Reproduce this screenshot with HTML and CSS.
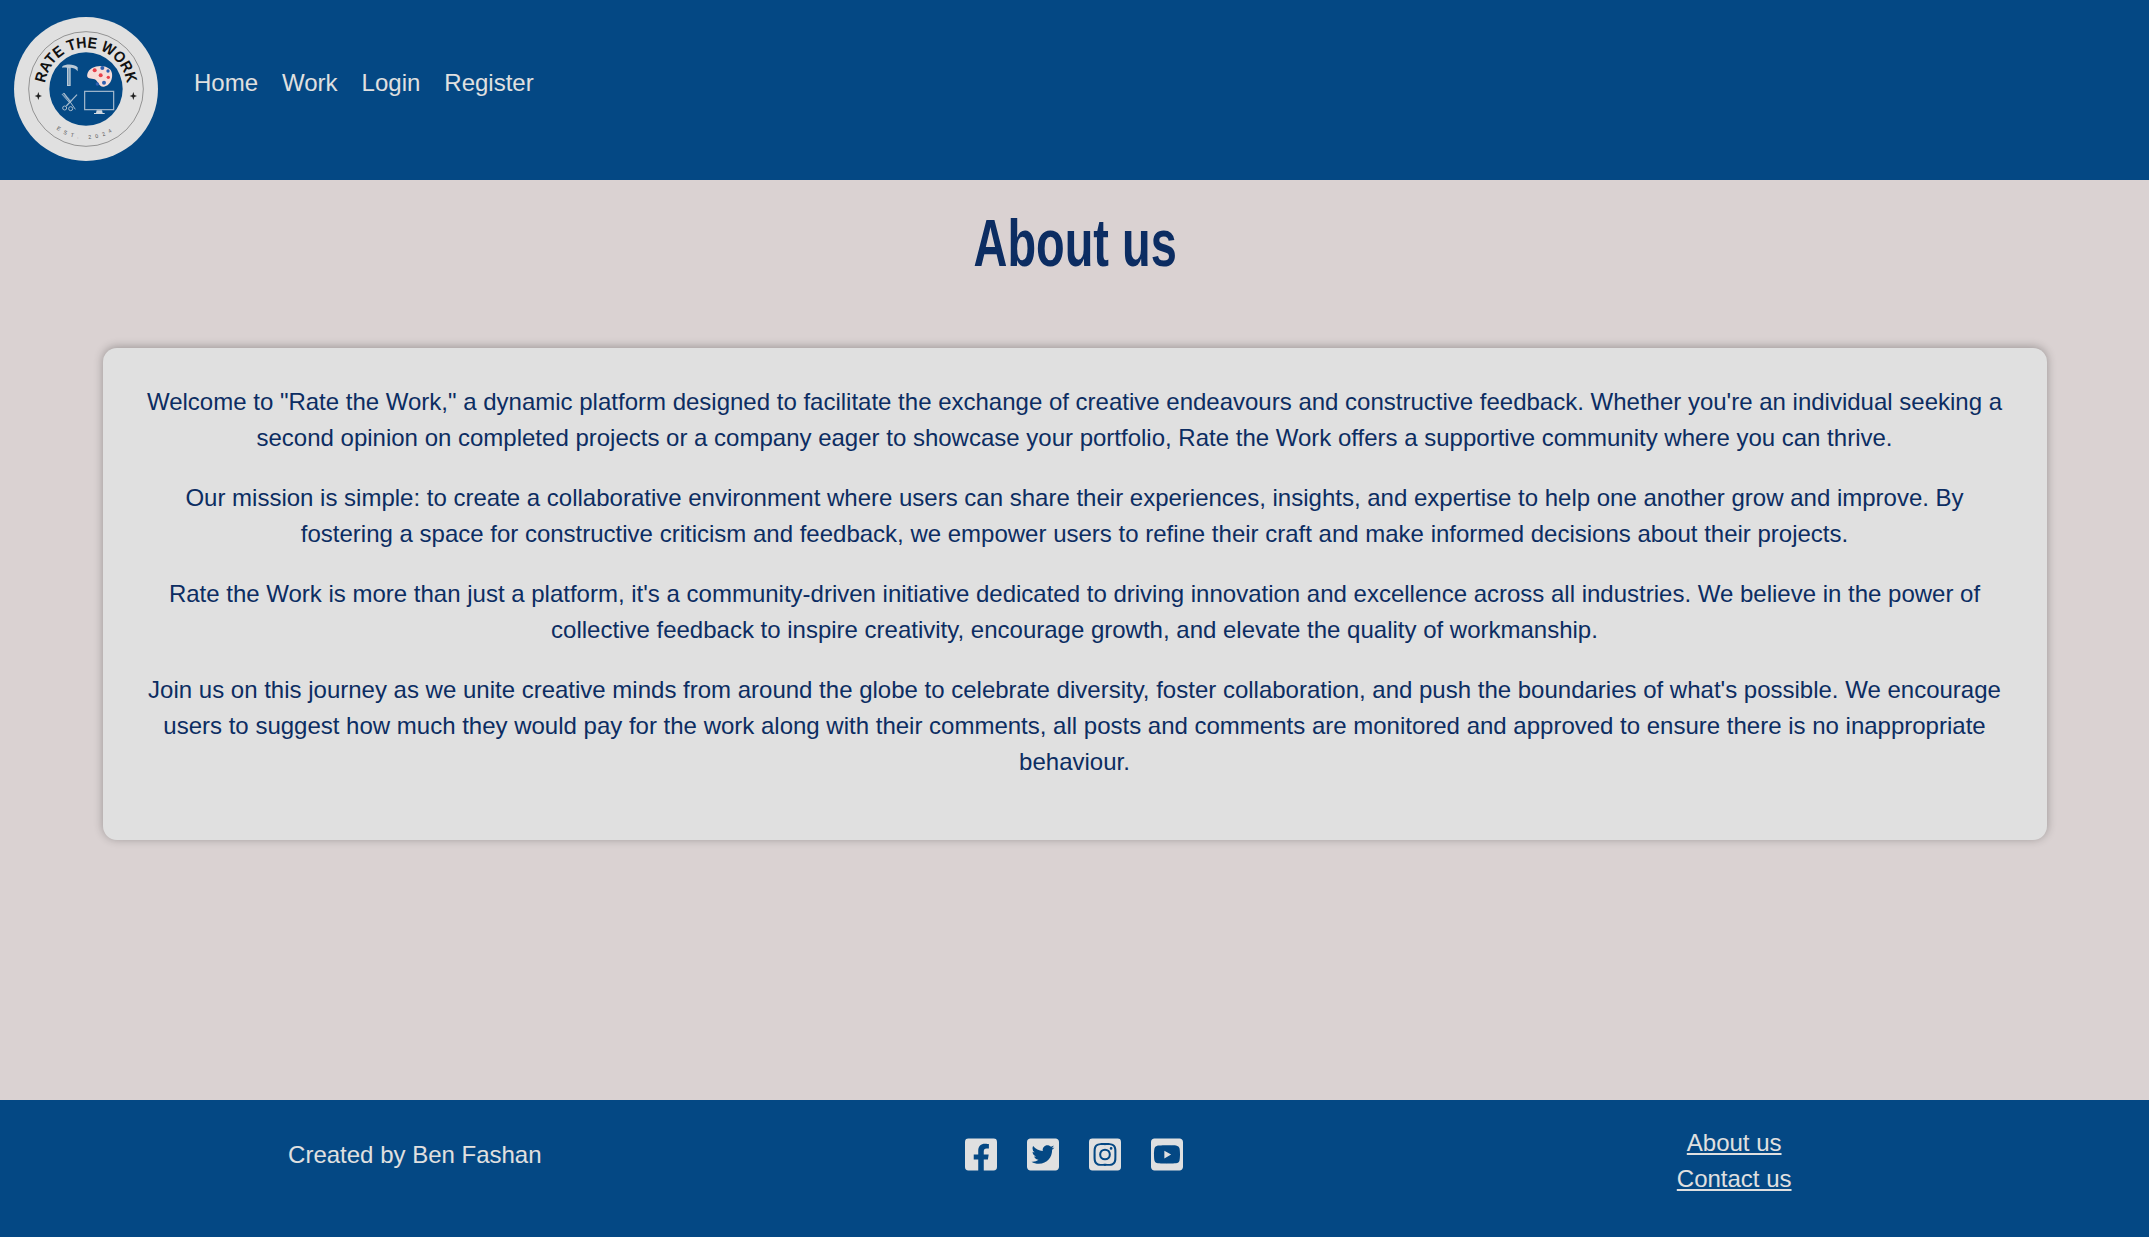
FILE: index.html
```html
<!DOCTYPE html>
<html lang="en">
<head>
    <meta charset="UTF-8">
    <meta name="viewport" content="width=device-width, initial-scale=1.0">
    <title>About us - Rate the Work</title>
    <link rel="stylesheet" href="styles.css">
</head>
<body>
    <header class="site-header">
        <a href="#" class="logo" aria-label="Rate the Work">
            <svg width="144" height="144" viewBox="42 51 432 432">
                <defs>
                    <path id="arc-top" d="M135.6 287 A124 124 0 1 1 380.4 287"></path>
                    <path id="arc-bottom" d="M108 267 A150 150 0 0 0 408 267"></path>
                </defs>
                <circle cx="258" cy="267" r="216" fill="#e0e0e0"></circle>
                <circle cx="258" cy="267" r="172" fill="none" stroke="#444" stroke-width="1.5"></circle>
                <circle cx="258" cy="267" r="110" fill="#044985"></circle>
                <text class="logo-title" text-anchor="middle"><textPath href="#arc-top" startOffset="50%" textLength="355" lengthAdjust="spacingAndGlyphs">RATE THE WORK</textPath></text>
                <text class="logo-est" text-anchor="middle"><textPath href="#arc-bottom" startOffset="50%">EST. 2024</textPath></text>
                <path d="M115 276 L118 285 L126 288 L118 291 L115 300 L112 291 L104 288 L112 285Z" fill="#222"></path>
                <path d="M400 276 L403 285 L411 288 L403 291 L400 300 L397 291 L389 288 L397 285Z" fill="#222"></path>
                <!-- hammer -->
                <path d="M187 199 C197 192 222 191 233 202 L233 214 C227 205 219 203 212 203 L212 258 L201 258 L201 203 C195 203 191 202 187 204Z" fill="#b9c9d6"></path>
                <path d="M205 205 H208 V255 H205Z" fill="#5f88ac"></path>
                <!-- palette -->
                <path d="M262 222 C268 196 312 190 330 208 C344 224 334 258 312 260 C296 262 296 244 284 238 C274 234 258 238 262 222Z" fill="#f6dcd8"></path>
                <circle cx="284" cy="211" r="6" fill="#e8404a"></circle>
                <circle cx="307" cy="204" r="6" fill="#2f5fb0"></circle>
                <circle cx="324" cy="213" r="5" fill="#2f5fb0"></circle>
                <circle cx="302" cy="226" r="6" fill="#e8404a"></circle>
                <circle cx="325" cy="232" r="5" fill="#e8404a"></circle>
                <circle cx="312" cy="248" r="6" fill="#2f5fb0"></circle>
                <circle cx="292" cy="252" r="5" fill="#2f5fb0"></circle>
                <!-- comb and scissors -->
                <g fill="none" stroke="#a9bdcf">
                    <path d="M188 281 L212 307" stroke-width="9" stroke-dasharray="2.5 1.5"></path>
                    <path d="M192 279 L226 328" stroke-width="3"></path>
                    <path d="M231 284 L199 318" stroke-width="3.5"></path>
                    <circle cx="194" cy="324" r="6" stroke-width="3"></circle>
                    <circle cx="212" cy="326" r="6" stroke-width="3"></circle>
                </g>
                <!-- monitor -->
                <rect x="254" y="274" width="87" height="55" fill="none" stroke="#a9bdcf" stroke-width="3.5"></rect>
                <path d="M290 331 H306 L308 339 H314 V342 H282 V339 H288Z" fill="#cfd8e0"></path>
            </svg>
        </a>
        <nav class="main-nav">
            <a href="#">Home</a>
            <a href="#">Work</a>
            <a href="#">Login</a>
            <a href="#">Register</a>
        </nav>
    </header>

    <main class="content">
        <div class="page-heading">
            <h1 class="page-title">About us</h1>
        </div>
        <section class="about-card">
            <p>Welcome to "Rate the Work," a dynamic platform designed to facilitate the exchange of creative endeavours and constructive feedback. Whether you're an individual seeking a second opinion on completed projects or a company eager to showcase your portfolio, Rate the Work offers a supportive community where you can thrive.</p>
            <p>Our mission is simple: to create a collaborative environment where users can share their experiences, insights, and expertise to help one another grow and improve. By fostering a space for constructive criticism and feedback, we empower users to refine their craft and make informed decisions about their projects.</p>
            <p>Rate the Work is more than just a platform, it's a community-driven initiative dedicated to driving innovation and excellence across all industries. We believe in the power of collective feedback to inspire creativity, encourage growth, and elevate the quality of workmanship.</p>
            <p>Join us on this journey as we unite creative minds from around the globe to celebrate diversity, foster collaboration, and push the boundaries of what's possible. We encourage users to suggest how much they would pay for the work along with their comments, all posts and comments are monitored and approved to ensure there is no inappropriate behaviour.</p>
        </section>
    </main>

    <footer class="site-footer">
        <div class="credit">Created by Ben Fashan</div>
        <div class="socials">
            <a href="#" aria-label="Facebook"><svg viewBox="0 0 448 512"><path d="M400 32H48A48 48 0 0 0 0 80v352a48 48 0 0 0 48 48h137.25V327.69h-63V256h63v-54.64c0-62.15 37-96.48 93.67-96.48 27.14 0 55.52 4.84 55.52 4.84v61h-31.27c-30.81 0-40.42 19.12-40.42 38.73V256h68.78l-11 71.69h-57.78V480H400a48 48 0 0 0 48-48V80a48 48 0 0 0-48-48z"></path></svg></a>
            <a href="#" aria-label="Twitter"><svg viewBox="0 0 448 512"><path d="M400 32H48C21.5 32 0 53.5 0 80v352c0 26.5 21.5 48 48 48h352c26.5 0 48-21.5 48-48V80c0-26.5-21.5-48-48-48zm-48.9 158.8c.2 2.8.2 5.7.2 8.5 0 86.7-66 186.6-186.6 186.6-37.2 0-71.7-10.8-100.7-29.4 5.3.6 10.4.8 15.8.8 30.7 0 58.9-10.4 81.4-28-28.8-.6-53-19.5-61.3-45.5 10.1 1.5 19.2 1.5 29.6-1.2-30-6.1-52.5-32.5-52.5-64.4v-.8c8.7 4.9 18.9 7.9 29.6 8.3a65.447 65.447 0 0 1-29.2-54.6c0-12.2 3.2-23.4 8.9-33.1 32.3 39.8 80.8 65.8 135.2 68.6-9.3-44.5 24-80.6 64-80.6 18.9 0 35.9 7.9 47.9 20.7 14.8-2.8 29-8.3 41.6-15.8-4.9 15.2-15.1 28-28.6 36 13.1-1.4 25.8-5.1 37.6-10.2-8.9 13.1-20.1 24.7-32.9 34z"></path></svg></a>
            <a href="#" aria-label="Instagram"><svg viewBox="0 0 448 512"><path d="M224,202.66A53.34,53.34,0,1,0,277.36,256,53.38,53.38,0,0,0,224,202.66Zm124.71-41a54,54,0,0,0-30.41-30.41c-21-8.29-71-6.43-94.3-6.43s-73.25-1.93-94.31,6.43a54,54,0,0,0-30.41,30.41c-8.28,21-6.43,71.05-6.43,94.33S91,329.26,99.32,350.33a54,54,0,0,0,30.41,30.41c21,8.29,71,6.43,94.31,6.43s73.24,1.93,94.3-6.43a54,54,0,0,0,30.41-30.41c8.35-21,6.43-71.05,6.43-94.33S357.1,182.74,348.75,161.67ZM224,338a82,82,0,1,1,82-82A81.9,81.9,0,0,1,224,338Zm85.38-148.3a19.14,19.14,0,1,1,19.13-19.14A19.1,19.1,0,0,1,309.42,189.74ZM400,32H48A48,48,0,0,0,0,80V432a48,48,0,0,0,48,48H400a48,48,0,0,0,48-48V80A48,48,0,0,0,400,32ZM382.88,322c-1.29,25.63-7.14,48.34-25.85,67s-41.4,24.63-67,25.85c-26.41,1.49-105.59,1.49-132,0-25.63-1.29-48.26-7.15-67-25.85s-24.63-41.42-25.85-67c-1.49-26.42-1.49-105.61,0-132,1.29-25.63,7.07-48.34,25.85-67s41.47-24.56,67-25.78c26.41-1.49,105.59-1.49,132,0,25.63,1.29,48.33,7.15,67,25.85s24.63,41.42,25.85,67.07C384.37,216.44,384.37,295.56,382.88,322Z"></path></svg></a>
            <a href="#" aria-label="YouTube"><svg viewBox="0 0 448 512"><path d="M186.8 202.1l95.2 54.1-95.2 54.1V202.1zM448 80v352c0 26.5-21.5 48-48 48H48c-26.5 0-48-21.5-48-48V80c0-26.5 21.5-48 48-48h352c26.5 0 48 21.5 48 48zm-42 176.3s0-59.6-7.6-88.2c-4.2-15.8-16.5-28.2-32.2-32.4C337.9 128 224 128 224 128s-113.9 0-142.2 7.7c-15.7 4.2-28 16.6-32.2 32.4-7.6 28.5-7.6 88.2-7.6 88.2s0 59.6 7.6 88.2c4.2 15.8 16.5 27.7 32.2 31.9C110.1 384 224 384 224 384s113.9 0 142.2-7.7c15.7-4.2 28-16.1 32.2-31.9 7.6-28.5 7.6-88.1 7.6-88.1z"></path></svg></a>
        </div>
        <div class="footer-links">
            <a href="#">About us</a>
            <a href="#">Contact us</a>
        </div>
    </footer>
</body>
</html>
```

FILE: styles.css
```css
* {
    box-sizing: border-box;
}
html, body {
    height: 100%;
}
body {
    font-family: "Liberation Sans", Arial, sans-serif;
    font-size: 24px;
    line-height: 36px;
    background-color: #dad2d2;
    color: #0c2d62;
    margin: 0;
    display: flex;
    flex-direction: column;
}
a {
    color: #e0e0e0;
}

/* header */
.site-header {
    height: 180px;
    background-color: #044884;
    display: flex;
    align-items: center;
    padding: 0 14px 2px;
    gap: 36px;
}
.logo {
    display: block;
    height: 144px;
}
.logo svg {
    display: block;
}
.logo-title {
    font-family: "Liberation Sans", Arial, sans-serif;
    font-size: 46px;
    font-weight: bold;
    fill: #111;
}
.logo-est {
    font-family: "Liberation Sans", Arial, sans-serif;
    font-size: 16px;
    letter-spacing: 13px;
    fill: #555;
}
.main-nav {
    display: flex;
    gap: 24px;
    margin-bottom: 12px;
}
.main-nav a {
    text-decoration: none;
}

/* main */
.content {
    flex: 1;
    padding: 0 102px 0 103px;
}
.page-heading {
    text-align: center;
    margin: 18px 0 60px;
}
/* no condensed face installed, so the bold is narrowed */
.page-title {
    display: inline-block;
    font-family: "Liberation Sans", sans-serif;
    font-size: 67px;
    line-height: 90px;
    font-weight: bold;
    margin: 0;
    transform: scaleX(0.7);
}
.about-card {
    background-color: #e0e0e0;
    border-radius: 14px;
    box-shadow: 0 -1px 10px rgba(0, 0, 0, 0.3);
    padding: 36px 37px 36px 36px;
    text-align: center;
}
.about-card p {
    margin: 0 0 24px;
}

/* footer */
.site-footer {
    height: 137px;
    background-color: #044884;
    color: #e0e0e0;
    display: grid;
    grid-template-columns: repeat(3, 1fr);
    padding: 25px 85px 0;
    text-align: center;
}
.credit {
    padding-top: 12px;
}
.socials {
    display: flex;
    justify-content: center;
    gap: 30px;
    padding: 11px 1px 0 0;
}
.socials a {
    display: block;
    height: 37px;
}
.socials svg {
    display: block;
    width: 32px;
    height: 37px;
    fill: #e0e0e0;
}
.footer-links a {
    display: block;
    width: fit-content;
    margin: 0 auto;
}
```
